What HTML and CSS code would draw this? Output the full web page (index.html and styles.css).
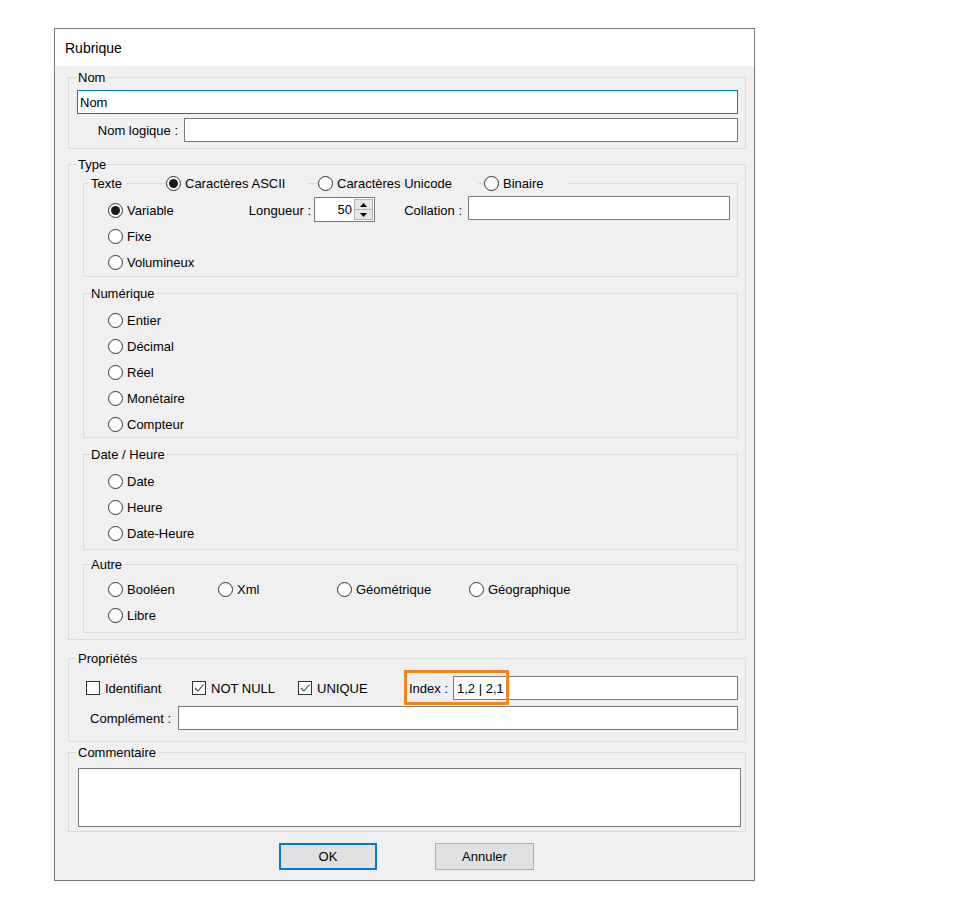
FILE: index.html
```html
<!DOCTYPE html>
<html lang="fr">
<head>
<meta charset="utf-8">
<title>Rubrique</title>
<link rel="stylesheet" href="styles.css">
</head>
<body>
<div class="dialog">
  <div class="titlebar">Rubrique</div>
  <div class="dbody">

    <div class="grp g-nom">
      <div class="legend"><span class="lg">Nom</span></div>
      <div class="gbody">
        <div class="input focus">Nom</div>
        <div class="frow nl"><span class="lbl l-nl">Nom logique :</span><div class="input grow"></div></div>
      </div>
    </div>

    <div class="grp g-type">
      <div class="legend"><span class="lg">Type</span></div>
      <div class="gbody">

        <div class="grp sub g-texte">
          <div class="legend sublegend">
            <span class="lg w-texte">Texte</span>
            <span class="radio lgr r-ascii on"><span class="dot"></span>Caractères ASCII</span>
            <span class="radio lgr r-uni"><span class="dot"></span>Caractères Unicode</span>
            <span class="radio lgr r-bin"><span class="dot"></span>Binaire</span>
          </div>
          <div class="gbody">
            <div class="opt-row">
              <span class="radio on w-var"><span class="dot"></span>Variable</span>
              <span class="lbl l-long">Longueur :</span>
              <div class="spin">
                <span class="spin-val">50</span>
                <span class="spin-btns">
                  <span class="sb"><svg width="7" height="4" viewBox="0 0 7 4"><path d="M0 4 L3.5 0 L7 4 Z" fill="#000"/></svg></span>
                  <span class="sb"><svg width="7" height="4" viewBox="0 0 7 4"><path d="M0 0 L7 0 L3.5 4 Z" fill="#000"/></svg></span>
                </span>
              </div>
              <span class="lbl l-coll">Collation :</span>
              <div class="input grow coll"></div>
            </div>
            <div class="opt-row"><span class="radio"><span class="dot"></span>Fixe</span></div>
            <div class="opt-row"><span class="radio"><span class="dot"></span>Volumineux</span></div>
          </div>
        </div>

        <div class="grp sub g-num">
          <div class="legend sublegend"><span class="lg">Numérique</span></div>
          <div class="gbody">
            <div class="opt-row"><span class="radio"><span class="dot"></span>Entier</span></div>
            <div class="opt-row"><span class="radio"><span class="dot"></span>Décimal</span></div>
            <div class="opt-row"><span class="radio"><span class="dot"></span>Réel</span></div>
            <div class="opt-row"><span class="radio"><span class="dot"></span>Monétaire</span></div>
            <div class="opt-row"><span class="radio"><span class="dot"></span>Compteur</span></div>
          </div>
        </div>

        <div class="grp sub g-date">
          <div class="legend sublegend"><span class="lg">Date / Heure</span></div>
          <div class="gbody">
            <div class="opt-row"><span class="radio"><span class="dot"></span>Date</span></div>
            <div class="opt-row"><span class="radio"><span class="dot"></span>Heure</span></div>
            <div class="opt-row"><span class="radio"><span class="dot"></span>Date-Heure</span></div>
          </div>
        </div>

        <div class="grp sub g-autre">
          <div class="legend sublegend"><span class="lg">Autre</span></div>
          <div class="gbody">
            <div class="opt-row">
              <span class="radio w-bool"><span class="dot"></span>Booléen</span>
              <span class="radio w-xml"><span class="dot"></span>Xml</span>
              <span class="radio w-geom"><span class="dot"></span>Géométrique</span>
              <span class="radio"><span class="dot"></span>Géographique</span>
            </div>
            <div class="opt-row"><span class="radio"><span class="dot"></span>Libre</span></div>
          </div>
        </div>

      </div>
    </div>

    <div class="grp g-prop">
      <div class="legend"><span class="lg">Propriétés</span></div>
      <div class="gbody">
        <div class="frow prop-r1">
          <span class="chk"><span class="box"></span>Identifiant</span>
          <span class="chk"><span class="box"><svg width="12" height="12" viewBox="0 0 12 12"><path d="M2 6 L5 9 L10.5 2.5" fill="none" stroke="#444" stroke-width="1.1"/></svg></span>NOT NULL</span>
          <span class="chk"><span class="box"><svg width="12" height="12" viewBox="0 0 12 12"><path d="M2 6 L5 9 L10.5 2.5" fill="none" stroke="#444" stroke-width="1.1"/></svg></span>UNIQUE</span>
          <span class="lbl l-index">Index :</span>
          <div class="input grow idx">1,2 | 2,1</div>
          <span class="hl"></span>
        </div>
        <div class="frow prop-r2"><span class="lbl l-comp">Complément :</span><div class="input grow"></div></div>
      </div>
    </div>

    <div class="grp g-comm">
      <div class="legend"><span class="lg">Commentaire</span></div>
      <div class="gbody">
        <div class="textarea"></div>
      </div>
    </div>

    <div class="buttons">
      <span class="btn btn-ok">OK</span>
      <span class="btn btn-cancel">Annuler</span>
    </div>

  </div>
</div>
</body>
</html>
```

FILE: styles.css
```css
body {
  margin: 0;
  background: #ffffff;
  font-family: "Liberation Sans", Arial, sans-serif;
  font-size: 13px;
  color: #000;
}

.dialog {
  width: 701px;
  margin: 28px 0 0 54px;
  border: 1px solid #7a7a7a;
  box-sizing: border-box;
  background: #f0f0f0;
}

.titlebar {
  height: 37px;
  background: #fff;
  display: flex;
  align-items: center;
  padding-left: 10px;
  font-size: 14px;
}

.dbody {
  padding: 0 8px 10px 13px;
}

/* group boxes */
.grp {
  border: 1px solid #dcdcdc;
}

.legend {
  display: flex;
  align-items: center;
  height: 15px;
  margin-top: -8px;
  margin-left: 7px;
}

.sublegend {
  margin-left: 5px;
}

.lg {
  background: #f0f0f0;
  padding: 0 2px;
  line-height: 15px;
  white-space: nowrap;
}

.g-nom { margin-top: 11px; }
.g-nom > .gbody { padding: 5px 7px 6px 8px; }

.g-type { margin-top: 15px; }
.g-type > .gbody { padding: 11px 7px 6px 14px; }

.sub > .gbody { padding: 6px 7px 0 24px; }
.g-texte > .gbody { padding-bottom: 1px; }

.g-num { margin-top: 16px; }
.g-date { margin-top: 16px; }
.g-date > .gbody { padding-bottom: 3px; }
.g-autre { margin-top: 14px; }
.g-autre > .gbody { padding-top: 4px; padding-bottom: 4px; }

.g-prop { margin-top: 18px; }
.g-prop > .gbody { padding: 10px 7px 11px 17px; }

.g-comm { margin-top: 10px; }
.g-comm > .gbody { padding: 8px 4px 4px 9px; }

/* inputs */
.input {
  height: 24px;
  box-sizing: border-box;
  border: 1px solid #7a7a7a;
  background: #fff;
  display: flex;
  align-items: center;
  padding-left: 2px;
  white-space: nowrap;
}

.input.focus { border-color: #0078d7; }

.grow { flex: 1; }

.frow {
  display: flex;
  align-items: center;
}

.lbl {
  white-space: nowrap;
  box-sizing: border-box;
}

.nl { margin-top: 4px; }
.l-nl { width: 107px; text-align: right; padding-right: 6px; }

/* texte sub group legend with radios */
.w-texte { width: 37px; box-sizing: border-box; }
.lgr {
  background: #f0f0f0;
  height: 15px;
}
.r-ascii { margin-left: 40px; width: 142px; }
.r-uni { margin-left: 10px; width: 160px; }
.r-bin { margin-left: 6px; width: 84px; }

/* radios */
.opt-row {
  height: 26px;
  display: flex;
  align-items: center;
}

.radio {
  display: flex;
  align-items: center;
  white-space: nowrap;
}

.dot {
  position: relative;
  width: 15px;
  height: 15px;
  box-sizing: border-box;
  border: 1px solid #333;
  border-radius: 50%;
  background: #fff;
  margin-right: 4px;
  flex: none;
}

.radio.on .dot::after {
  content: "";
  position: absolute;
  left: 2px;
  top: 2px;
  width: 9px;
  height: 9px;
  border-radius: 50%;
  background: #1a1a1a;
}

.w-var { width: 140px; }
.l-long { width: 63px; text-align: right; }

.spin {
  align-self: flex-start;
  margin-left: 3px;
  width: 61px;
  height: 25px;
  box-sizing: border-box;
  border: 1px solid #7a7a7a;
  background: #fff;
  display: flex;
}

.spin-val {
  flex: 1;
  text-align: right;
  line-height: 23px;
  padding-right: 2px;
}

.spin-btns {
  width: 19px;
  margin: 1px 1px 1px 0;
  display: flex;
  flex-direction: column;
}

.sb {
  flex: 1;
  background: #e6e6e6;
  border: 1px solid #b4b4b4;
  display: flex;
  align-items: center;
  justify-content: center;
}

.sb + .sb { border-top: 0; }

.l-coll { width: 87px; text-align: right; }
.coll {
  align-self: flex-start;
  margin-top: -1px;
  margin-left: 6px;
}

.w-bool { width: 110px; }
.w-xml { width: 119px; }
.w-geom { width: 132px; }

/* propriétés */
.prop-r1 { position: relative; height: 24px; }
.prop-r2 { margin-top: 6px; }

.chk {
  display: flex;
  align-items: center;
  width: 106px;
  white-space: nowrap;
}

.box {
  width: 14px;
  height: 14px;
  box-sizing: border-box;
  border: 1px solid #333;
  background: #fff;
  margin-right: 5px;
  display: flex;
  align-items: center;
  justify-content: center;
  flex: none;
}

.l-index { width: 49px; padding-left: 5px; }
.idx { padding-left: 3px; }

.hl {
  position: absolute;
  left: 318px;
  top: -6px;
  width: 105px;
  height: 35px;
  box-sizing: border-box;
  border: 3px solid #f7841f;
}

.l-comp { width: 92px; text-align: right; padding-right: 7px; }

.textarea {
  height: 59px;
  box-sizing: border-box;
  border: 1px solid #7a7a7a;
  background: #fff;
}

/* buttons */
.buttons {
  margin-top: 11px;
  display: flex;
  padding-left: 211px;
}

.btn {
  height: 27px;
  box-sizing: border-box;
  background: #e1e1e1;
  display: flex;
  align-items: center;
  justify-content: center;
}

.btn-ok {
  width: 98px;
  border: 2px solid #0078d7;
}

.btn-cancel {
  width: 99px;
  margin-left: 58px;
  border: 1px solid #adadad;
}
```
